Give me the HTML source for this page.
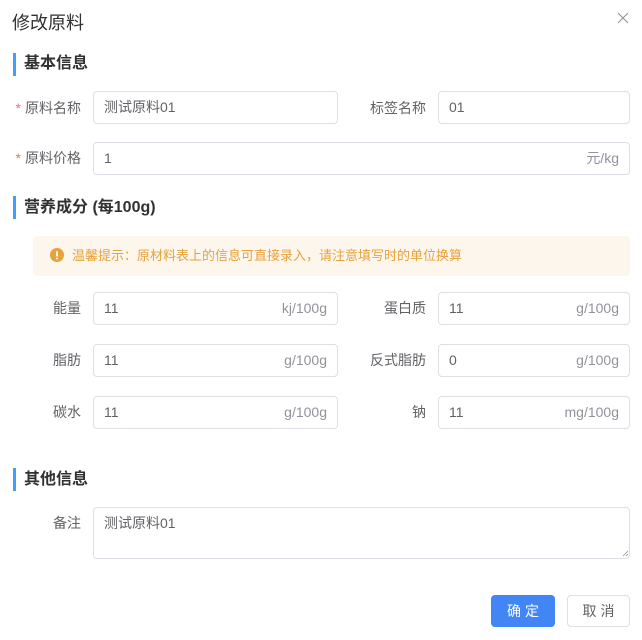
<!DOCTYPE html>
<html><head><meta charset="utf-8"><style>
*{box-sizing:border-box;margin:0;padding:0}
body{width:642px;height:640px;background:#fff;font-family:"Liberation Sans","Noto Sans CJK SC",sans-serif;position:relative;overflow:hidden;color:#606266}
.a{position:absolute}
.title{left:12px;top:11px;font-size:18px;color:#303133;line-height:24px}
.close{left:617px;top:12px;width:12px;height:12px}
.bar{left:13px;width:3px;height:23px;background:#409eff}
.sec{left:24px;font-size:16px;font-weight:bold;color:#303133;line-height:22px}
.lbl{font-size:14px;color:#606266;text-align:right;line-height:32px;width:80px}
.star{color:#f56c6c;margin-right:4px}
.inp{border:1px solid #dcdfe6;border-radius:4px;height:33px;font-size:14px;color:#606266;line-height:31px;padding:0 10px}
.suf{position:absolute;right:10px;top:0;color:#909399}
.btn{height:32px;border-radius:4px;font-size:14px;text-align:center;line-height:30px;letter-spacing:4px;text-indent:4px}
</style></head><body>
<div class="a title">修改原料</div>
<svg class="a close" viewBox="0 0 12 12"><path d="M1 1L11 11M11 1L1 11" stroke="#909399" stroke-width="1.1"/></svg>

<div class="a bar" style="top:53px"></div><div class="a sec" style="top:53px">基本信息</div>
<div class="a lbl" style="left:1px;top:92px"><span class="star">*</span>原料名称</div>
<div class="a inp" style="left:93px;top:91px;width:245px">测试原料01</div>
<div class="a lbl" style="left:346px;top:92px">标签名称</div>
<div class="a inp" style="left:438px;top:91px;width:192px">01</div>
<div class="a lbl" style="left:1px;top:142px"><span class="star">*</span>原料价格</div>
<div class="a inp" style="left:93px;top:142px;width:537px">1<span class="suf">元/kg</span></div>

<div class="a bar" style="top:196px"></div><div class="a sec" style="top:197px">营养成分 (每100g)</div>
<div class="a" style="left:33px;top:236px;width:597px;height:40px;background:#fdf6ec;border-radius:4px"></div>
<svg class="a" style="left:50px;top:248px" width="14" height="14" viewBox="0 0 14 14"><circle cx="7" cy="7" r="7" fill="#e6a23c"/><rect x="6.1" y="3" width="1.8" height="5.5" rx=".8" fill="#fff"/><circle cx="7" cy="10.5" r="1" fill="#fff"/></svg>
<div class="a" style="left:72px;top:246px;font-size:13px;color:#e6a23c;line-height:20px">温馨提示：原材料表上的信息可直接录入，请注意填写时的单位换算</div>

<div class="a lbl" style="left:1px;top:292px">能量</div>
<div class="a inp" style="left:93px;top:292px;width:245px">11<span class="suf">kj/100g</span></div>
<div class="a lbl" style="left:346px;top:292px">蛋白质</div>
<div class="a inp" style="left:438px;top:292px;width:192px">11<span class="suf">g/100g</span></div>
<div class="a lbl" style="left:1px;top:344px">脂肪</div>
<div class="a inp" style="left:93px;top:344px;width:245px">11<span class="suf">g/100g</span></div>
<div class="a lbl" style="left:346px;top:344px">反式脂肪</div>
<div class="a inp" style="left:438px;top:344px;width:192px">0<span class="suf">g/100g</span></div>
<div class="a lbl" style="left:1px;top:396px">碳水</div>
<div class="a inp" style="left:93px;top:396px;width:245px">11<span class="suf">g/100g</span></div>
<div class="a lbl" style="left:346px;top:396px">钠</div>
<div class="a inp" style="left:438px;top:396px;width:192px">11<span class="suf">mg/100g</span></div>

<div class="a bar" style="top:468px"></div><div class="a sec" style="top:469px">其他信息</div>
<div class="a lbl" style="left:1px;top:507px">备注</div>
<div class="a inp" style="left:93px;top:507px;width:537px;height:52px;line-height:20px;padding-top:5px">测试原料01</div>
<svg class="a" style="left:621px;top:549px" width="8" height="8"><path d="M7 2L2 7M7 5L5 7" stroke="#909399" stroke-width=".8"/></svg>

<div class="a btn" style="left:491px;top:595px;width:64px;background:#4285f4;color:#fff;border:1px solid #4285f4">确定</div>
<div class="a btn" style="left:567px;top:595px;width:63px;background:#fff;color:#606266;border:1px solid #dcdfe6">取消</div>
</body></html>
